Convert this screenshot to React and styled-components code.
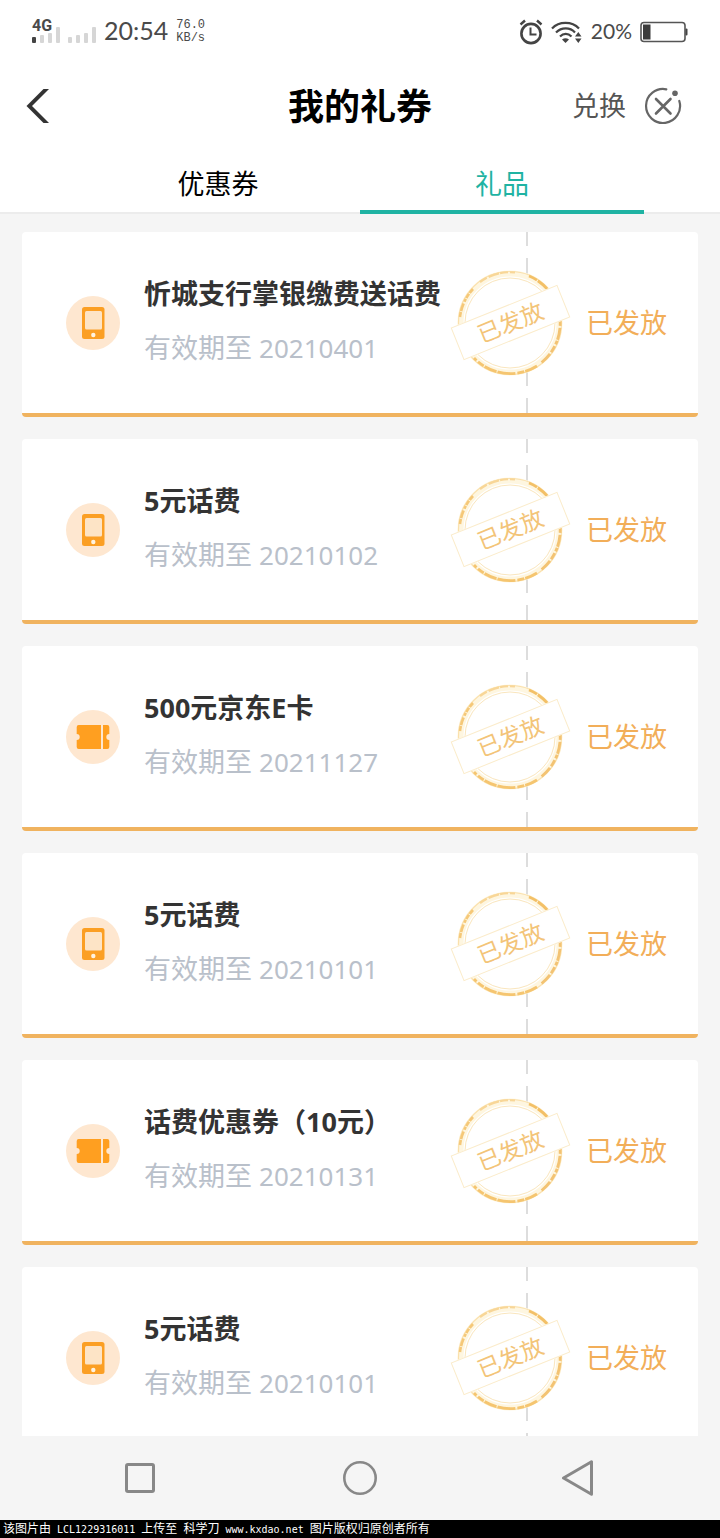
import { useState } from 'react';
import styled, { createGlobalStyle } from 'styled-components';

const gifts = [
  { id: 1, kind: 'phone', name: '忻城支行掌银缴费送话费', date: '20210401' },
  { id: 2, kind: 'phone', name: '5元话费', date: '20210102' },
  { id: 3, kind: 'ticket', name: '500元京东E卡', date: '20211127' },
  { id: 4, kind: 'phone', name: '5元话费', date: '20210101' },
  { id: 5, kind: 'ticket', name: '话费优惠券（10元）', date: '20210131' },
  { id: 6, kind: 'phone', name: '5元话费', date: '20210101' },
];

const tabs = ['优惠券', '礼品'];

const SignalBars = ({ active }) => (
  <svg width='28' height='16' viewBox='0 0 28 16' aria-hidden='true'>
    <rect x='0' y='10' width='4' height='6' rx='1' fill={active ? '#444' : '#d6d6d6'} />
    <rect x='8' y='8' width='4' height='8' rx='1' fill='#d6d6d6' />
    <rect x='16' y='6' width='4' height='10' rx='1' fill='#d6d6d6' />
    <rect x='24' y='0' width='4' height='16' rx='1' fill='#d6d6d6' />
  </svg>
);

const AlarmIcon = () => (
  <svg width='24' height='26' viewBox='0 0 24 26' fill='none' stroke='#444' aria-hidden='true'>
    <circle cx='12' cy='14.5' r='9.6' strokeWidth='2.6' />
    <path d='M11.5 8.5v7h6' strokeWidth='2' />
    <path d='M1.5 5.5l4.5-4M22.5 5.5l-4.5-4' strokeWidth='2.4' />
  </svg>
);

const WifiIcon = () => (
  <svg width='32' height='24' viewBox='0 0 32 24' fill='none' stroke='#444' aria-hidden='true'>
    <path d='M1 8.5C8 1 21 1 28 8.5' strokeWidth='2.2' />
    <path d='M5 12.5C10.5 7 19 7 24 12.5' strokeWidth='2.2' />
    <path d='M9 16.5C12.5 13 17 13 20.5 16.5' strokeWidth='2.2' />
    <path d='M11 19.5q3.5-2.5 7 0L14.5 23z' fill='#444' stroke='none' />
    <path d='M24 16.5l3.3-4.5 3.2 4.5zM24 18.5h6.5L27.3 23z' fill='#444' stroke='none' />
  </svg>
);

const BatteryIcon = () => (
  <svg width='48' height='22' viewBox='0 0 48 22' aria-hidden='true'>
    <rect x='1' y='1.5' width='44' height='19' rx='3' fill='none' stroke='#555' strokeWidth='1.6' />
    <rect x='3' y='3.5' width='7.5' height='15' fill='#3c3c3c' />
    <rect x='45.5' y='7.5' width='2' height='7' rx='1' fill='#444' />
  </svg>
);

const BackIcon = () => (
  <svg width='24' height='34' viewBox='0 0 24 34' aria-hidden='true'>
    <path d='M17.5 0H23L6 17l17 17h-5.5L0.5 17z' fill='#333' />
  </svg>
);

const CloseIcon = () => (
  <svg width='38' height='38' viewBox='0 0 38 38' fill='none' stroke='#666' aria-hidden='true'>
    <path d='M22.3 2.3A17 17 0 1 0 35.3 14' strokeWidth='2.2' strokeLinecap='round' />
    <path d='M12 12l14.5 14.5M26.5 12L12 26.5' strokeWidth='2.6' strokeLinecap='round' />
    <circle cx='31' cy='6.2' r='2.8' fill='#666' stroke='none' />
  </svg>
);

const PhoneIcon = () => (
  <svg width='54' height='54' viewBox='0 0 54 54' aria-hidden='true'>
    <circle cx='27' cy='27' r='27' fill='#fee7d0' />
    <rect x='16' y='11' width='22.5' height='32' rx='2.5' fill='#fb9f24' />
    <rect x='19' y='15' width='17' height='18.5' rx='1.5' fill='#fde4c6' />
    <circle cx='27.3' cy='39' r='2.2' fill='#fff3e0' />
  </svg>
);

const TicketIcon = () => (
  <svg width='54' height='54' viewBox='0 0 54 54' aria-hidden='true'>
    <circle cx='27' cy='27' r='27' fill='#fee7d0' />
    <path
      d='M12.7 15H35v24H12.7a2 2 0 0 1-2-2v-7a3 3 0 0 0 0-6v-7a2 2 0 0 1 2-2zM37 15h4.3a2 2 0 0 1 2 2v7a3 3 0 0 0 0 6v7a2 2 0 0 1-2 2H37z'
      fill='#ff9f20'
    />
  </svg>
);

const StampRings = () => (
  <svg width='106' height='106' viewBox='0 0 106 106' fill='none' aria-hidden='true'>
    <circle cx='53' cy='53' r='49.5' fill='#fff' stroke='#fef6e0' strokeWidth='6' />
    <circle cx='53' cy='53' r='51.5' stroke='#fae0ac' strokeWidth='1.2' />
    <path d='M72 6A50.5 50.5 0 0 1 92 21' stroke='#f3c067' strokeWidth='2.8' strokeDasharray='9 1 14 2' />
    <path d='M3 47A50.5 50.5 0 0 1 16 19' stroke='#f5c878' strokeWidth='2.6' strokeDasharray='5 1 8 2 3 1' />
    <path d='M23 12A50.5 50.5 0 0 1 58 2.5' stroke='#f8d697' strokeWidth='2.2' strokeDasharray='8 2 11 1' />
    <path d='M103 49A50.5 50.5 0 0 1 84 93' stroke='#f3c373' strokeWidth='2.8' strokeDasharray='7 2 12 1 4 2' />
    <path d='M80 96A50.5 50.5 0 0 1 17 88' stroke='#f5c570' strokeWidth='2.8' strokeDasharray='13 1 7 2 18 1' />
    <circle cx='53' cy='53' r='45' stroke='#fae6bd' strokeWidth='1' />
  </svg>
);

const icons = { phone: PhoneIcon, ticket: TicketIcon };

const GiftCard = ({ gift }) => {
  const Icon = icons[gift.kind];

  return (
    <Card>
      <Icon />
      <Info>
        <GiftName>{gift.name}</GiftName>
        <Expiry>
          有效期至 <time>{gift.date}</time>
        </Expiry>
      </Info>
      <Status>
        <Stamp>
          <StampRings />
          <StampBanner>已发放</StampBanner>
        </Stamp>
        <p>已发放</p>
      </Status>
    </Card>
  );
};

const App = () => {
  const [current, setCurrent] = useState('礼品');

  return (
    <Page>
      <GlobalStyle />
      <StatusBar>
        <StatusGroup>
          <Sim>
            <Network>4G</Network>
            <SignalBars active />
          </Sim>
          <Sim>
            <SignalBars />
          </Sim>
          <Clock>20:54</Clock>
          <Speed>
            <span>76.0</span>
            <span>KB/s</span>
          </Speed>
        </StatusGroup>
        <StatusGroup>
          <AlarmIcon />
          <WifiIcon />
          <Percent>20%</Percent>
          <BatteryIcon />
        </StatusGroup>
      </StatusBar>

      <Header>
        <IconButton type='button' aria-label='返回'>
          <BackIcon />
        </IconButton>
        <h1>我的礼券</h1>
        <Actions>
          <TextButton type='button'>兑换</TextButton>
          <IconButton type='button' aria-label='关闭'>
            <CloseIcon />
          </IconButton>
        </Actions>
      </Header>

      <Tabs role='tablist'>
        {tabs.map((tab) => (
          <Tab
            key={tab}
            type='button'
            role='tab'
            aria-selected={tab === current}
            $active={tab === current}
            onClick={() => setCurrent(tab)}
          >
            {tab}
          </Tab>
        ))}
      </Tabs>

      <List>
        {gifts.map((gift) => (
          <GiftCard key={gift.id} gift={gift} />
        ))}
      </List>

      <NavBar>
        <IconButton type='button' aria-label='最近任务'>
          <svg width='30' height='30' viewBox='0 0 30 30' fill='none' stroke='#888' strokeWidth='3'>
            <rect x='1.5' y='1.5' width='27' height='27' rx='1.5' />
          </svg>
        </IconButton>
        <IconButton type='button' aria-label='主屏幕'>
          <svg width='34' height='34' viewBox='0 0 34 34' fill='none' stroke='#888' strokeWidth='2.6'>
            <circle cx='17' cy='17' r='15.7' />
          </svg>
        </IconButton>
        <IconButton type='button' aria-label='后退'>
          <svg
            width='36'
            height='36'
            viewBox='0 0 36 36'
            fill='none'
            stroke='#888'
            strokeWidth='3'
            strokeLinejoin='round'
          >
            <path d='M1.5 18L29.5 1.8v32.4z' />
          </svg>
        </IconButton>
      </NavBar>

      <Credit>
        该图片由<span> LCL1229316011 </span>上传至<span> </span>科学刀
        <span> www.kxdao.net </span>图片版权归原创者所有
      </Credit>
    </Page>
  );
};

const GlobalStyle = createGlobalStyle`
  * {
    box-sizing: border-box;
    margin: 0;
    padding: 0;
  }
  body {
    background: #f5f5f5;
    font-family: 'Noto Sans', 'Noto Sans CJK SC', sans-serif;
  }
  button {
    border: none;
    background: none;
    font-family: inherit;
    cursor: pointer;
  }
  svg {
    display: block;
    flex-shrink: 0;
  }
`;

const Page = styled.div`
  display: flex;
  flex-direction: column;
  height: 100vh;
`;

const StatusBar = styled.div`
  display: flex;
  justify-content: space-between;
  align-items: center;
  height: 64px;
  padding: 0 32px;
  background: #fff;
  color: #4a4a4a;
`;

const StatusGroup = styled.div`
  display: flex;
  align-items: center;
  gap: 8px;
`;

const Sim = styled.div`
  position: relative;
  padding-top: 6px;
`;

const Network = styled.span`
  position: absolute;
  left: 0;
  top: -4px;
  font: bold 16px/18px Roboto, sans-serif;
`;

const Clock = styled.span`
  padding-bottom: 4px;
  font: 25px/32px Lato, sans-serif;
`;

const Speed = styled.div`
  display: flex;
  flex-direction: column;
  font: 12px/13px 'Liberation Mono', monospace;
`;

const Percent = styled.span`
  padding-bottom: 2px;
  font: 21px/32px Lato, sans-serif;
`;

const Header = styled.header`
  display: grid;
  grid-template-columns: 1fr auto 1fr;
  align-items: center;
  height: 84px;
  padding: 0 26px;
  background: #fff;
  h1 {
    padding-top: 2px;
    font-size: 36px;
    line-height: 48px;
    font-weight: 700;
    color: #000;
  }
`;

const IconButton = styled.button`
  display: flex;
  align-items: center;
`;

const Actions = styled.div`
  display: flex;
  justify-content: flex-end;
  align-items: center;
  gap: 18px;
  padding-right: 12px;
`;

const TextButton = styled.button`
  font-size: 27px;
  line-height: 36px;
  color: #555;
`;

const Tabs = styled.div`
  display: flex;
  height: 66px;
  padding: 0 76px;
  background: #fff;
  box-shadow: inset 0 -2px #ececec;
`;

const Tab = styled.button`
  flex: 1;
  padding-top: 10px;
  border-bottom: 4px solid ${({ $active }) => ($active ? '#1fb3a3' : 'transparent')};
  font-size: 27px;
  line-height: 36px;
  color: ${({ $active }) => ($active ? '#1fb3a3' : '#000')};
`;

const List = styled.ul`
  flex: 1;
  min-height: 0;
  display: flex;
  flex-direction: column;
  gap: 22px;
  padding: 18px 22px 0;
  overflow-y: auto;
  scrollbar-width: none;
  list-style: none;
`;

const Card = styled.li`
  flex-shrink: 0;
  display: flex;
  align-items: center;
  height: 185px;
  padding-left: 44px;
  border-bottom: 4px solid #f0b35f;
  border-radius: 4px;
  background: #fff;
`;

const Info = styled.div`
  flex: 1;
  padding: 0 0 4px 24px;
  font-size: 27px;
  line-height: 54px;
  white-space: nowrap;
`;

const GiftName = styled.h2`
  font-size: 27px;
  font-weight: 700;
  color: #333;
`;

const Expiry = styled.p`
  color: #b9c0ca;
  time {
    font-size: 26px;
  }
`;

const Status = styled.div`
  position: relative;
  align-self: stretch;
  display: flex;
  align-items: center;
  width: 172px;
  padding-left: 60px;
  background: repeating-linear-gradient(#ddd 0 14px, transparent 14px 26px, #ddd 26px 28px) left / 2px 100%
    no-repeat;
  font-size: 27px;
  line-height: 36px;
  color: #f2ae59;
`;

/* sits across the tear line of the coupon */
const Stamp = styled.div`
  position: absolute;
  left: -76px;
  top: 0;
  bottom: 0;
  width: 120px;
  display: grid;
  place-items: center;
  > * {
    grid-area: 1 / 1;
  }
`;

const StampBanner = styled.span`
  width: 115px;
  border: 1px solid #fbeccb;
  background: #fff;
  font-size: 23px;
  line-height: 33px;
  text-align: center;
  color: #f3c478;
  transform: rotate(-22deg);
`;

const NavBar = styled.nav`
  display: grid;
  grid-template-columns: repeat(3, 1fr);
  justify-items: center;
  height: 84px;
  padding: 0 30px;
  background: #f5f5f5;
`;

const Credit = styled.footer`
  height: 18px;
  padding-left: 3px;
  background: #000;
  color: #fff;
  font-size: 12px;
  line-height: 18px;
  white-space: nowrap;
  overflow: hidden;
  span {
    font-family: 'DejaVu Sans Mono', monospace;
    font-size: 10px;
    white-space: pre;
  }
`;

export default App;
